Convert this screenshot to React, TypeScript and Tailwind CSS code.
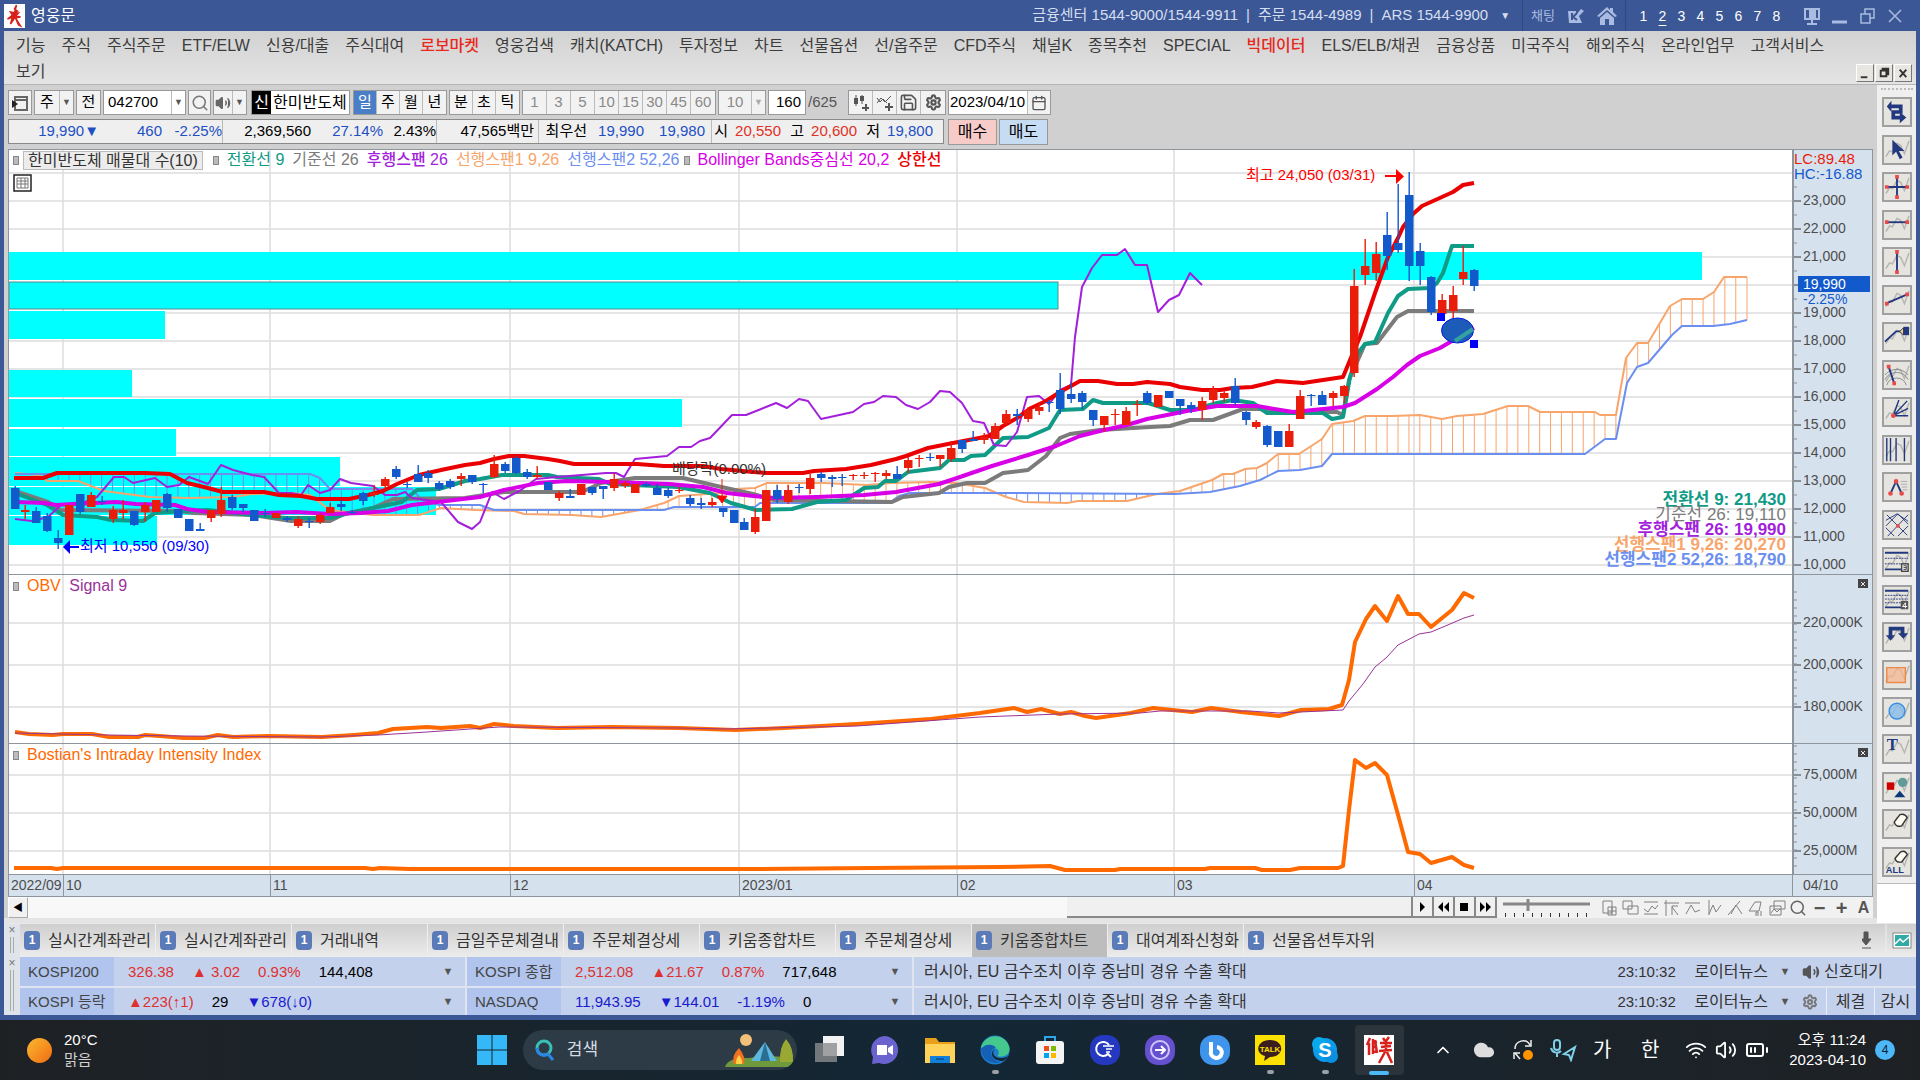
import type { ReactNode } from "react";
import clsx from "clsx";
import {
  BatteryMedium,
  Calendar,
  ChevronUp,
  Cloud,
  Home,
  Save,
  Search,
  Settings,
  Volume2,
  Wifi,
} from "lucide-react";

type Point = [number, number];
type Candle = ["R" | "B", number, number, number?, number?];

const FONT = 'font-["Liberation_Sans","Noto_Sans_CJK_KR",sans-serif]';

/* ---------- chart data ---------- */

const LEFT = 9;
const PLOT_W = 1783;
const barX = (i: number) => 14.5 + i * 10.894;

const parse = (s: string): Point[] =>
  s.split(" ").map((p) => p.split(",").map(Number) as Point);

const UPPER =
  "14,478 43,478 57,473 145,473 170,474 187,483 204,487 223,492 264,492 279,495 301,496 317,499 349,499 368,495 383,491 397,484 419,475 441,470 465,465 480,463 494,459 509,456 524,456 548,459 560,461 574,464 637,464 664,466 703,466 721,469 753,472 767,473 803,473 814,471 846,469 871,465 896,459 906,456 928,448 953,443 974,439 989,436 1003,426 1017,418 1031,408 1046,401 1060,392 1071,386 1080,381 1098,381 1117,384 1133,384 1147,382 1170,384 1180,387 1202,390 1220,390 1233,388 1252,387 1277,381 1303,383 1343,377 1350,360 1360,337 1375,293 1388,257 1398,238 1403,227 1413,214 1422,206 1453,192 1463,185 1474,183";
const CENTER =
  "15,502 44,503 56,505 73,504 116,502 136,504 175,505 187,509 208,512 264,513 296,512 330,514 361,513 388,511 412,505 446,501 480,497 504,490 538,483 567,481 611,482 669,484 703,487 727,493 753,496 774,498 817,497 864,495 896,492 939,484 960,477 992,466 1028,455 1056,446 1080,436 1100,431 1127,425 1147,419 1187,411 1217,406 1257,406 1293,412 1313,410 1343,407 1355,403 1377,389 1393,377 1407,365 1420,356 1440,348 1474,328";
const CONVERSION =
  "15,493 47,505 63,515 97,517 111,520 143,521 155,513 184,511 208,510 252,515 286,518 330,518 349,513 373,508 402,502 417,490 439,489 465,481 480,479 502,475 548,475 557,477 599,479 610,484 678,487 710,493 731,503 756,510 792,509 817,502 846,500 864,488 878,487 885,481 896,481 908,472 940,468 949,460 964,460 971,456 985,455 1003,438 1028,437 1049,428 1060,410 1083,409 1093,400 1103,403 1148,403 1170,410 1193,410 1217,403 1233,400 1253,403 1267,413 1323,413 1332,419 1343,417 1350,377 1358,353 1365,344 1375,342 1388,313 1398,296 1408,289 1430,288 1437,283 1443,273 1452,246 1474,246";
const BASE =
  "15,491 48,502 60,510 179,511 194,513 252,515 291,521 330,521 344,514 373,508 393,499 465,498 504,492 582,492 601,483 635,478 683,478 717,486 753,494 774,500 892,502 903,497 939,493 949,487 967,483 985,483 1003,473 1028,470 1046,456 1060,438 1070,434 1100,430 1150,427 1170,426 1190,420 1213,420 1243,409 1260,409 1273,412 1337,412 1343,415 1349,380 1365,344 1377,343 1397,317 1408,311 1474,311";
const LAGGING =
  "15,519 32,521 48,517 61,505 80,504 97,497 114,477 124,477 133,483 155,478 167,487 179,485 189,477 208,484 221,465 233,470 252,475 264,477 279,493 291,493 301,495 308,485 320,493 330,490 340,479 351,483 373,486 385,495 397,495 405,492 412,498 441,502 458,522 472,529 480,522 492,492 504,499 521,490 536,479 557,477 606,473 616,473 624,477 635,459 667,456 679,447 691,447 700,441 710,438 732,415 746,415 776,403 787,408 799,399 808,401 821,419 853,412 864,404 874,402 883,396 896,397 906,405 918,409 930,402 940,391 950,392 962,403 973,421 984,423 994,445 1006,446 1017,432 1027,397 1039,396 1049,404 1060,390 1071,385 1075,337 1082,287 1092,268 1102,255 1117,255 1125,249 1135,265 1147,265 1158,312 1169,300 1179,295 1190,273 1202,285";
const SPAN_A =
  "15,473 39,475 47,481 78,481 104,491 150,497 189,498 233,497 252,494 291,493 310,495 330,510 373,515 419,515 441,508 475,510 514,511 524,514 572,515 601,517 640,510 664,503 679,496 721,493 735,489 755,488 767,483 824,483 867,485 892,483 931,482 956,483 985,488 1006,497 1024,502 1067,503 1078,501 1127,501 1157,494 1180,491 1212,480 1223,474 1233,474 1245,469 1257,468 1267,463 1278,454 1299,454 1322,439 1332,424 1353,421 1365,416 1393,416 1420,415 1442,419 1457,416 1483,414 1508,406 1528,406 1540,412 1595,412 1600,415 1616,415 1626,358 1637,343 1648,343 1670,306 1682,299 1703,299 1714,292 1724,277 1747,277";
const SPAN_B =
  "15,474 310,474 320,478 330,489 412,489 422,500 439,505 480,505 494,510 664,510 674,507 755,507 760,503 889,503 899,496 910,493 1017,493 1175,494 1210,492 1240,486 1260,480 1278,471 1300,470 1322,466 1332,454 1585,454 1605,439 1616,439 1627,383 1637,367 1648,363 1672,335 1682,326 1713,326 1730,324 1747,320";
const OBV =
  "15,732 29,734 53,735 63,734 92,734 109,737 138,737 145,735 160,736 184,738 204,738 218,735 233,737 267,736 322,737 354,735 378,733 393,729 427,727 441,728 470,726 480,728 494,724 514,726 557,728 611,727 679,728 735,730 784,728 857,724 931,719 980,713 1014,708 1027,712 1041,709 1060,714 1071,712 1085,716 1096,718 1131,713 1153,708 1192,712 1211,708 1241,712 1279,716 1301,710 1329,709 1342,705 1349,680 1355,642 1366,619 1375,606 1387,621 1398,596 1408,614 1419,614 1431,627 1452,610 1464,593 1474,598";
const SIGNAL =
  "15,733 109,735 184,736 320,737 378,735 427,732 499,727 679,728 727,729 857,726 980,717 1060,714 1140,713 1160,711 1250,711 1279,713 1343,710 1349,701 1363,684 1375,667 1386,658 1398,645 1419,634 1431,632 1443,627 1464,618 1474,615";
const INTENSITY =
  "14,868 51,868 57,869 63,868 365,868 373,869 380,868 410,869 760,869 870,868 1000,867 1050,866 1065,870 1115,870 1120,869 1205,869 1210,868 1255,868 1262,870 1290,870 1300,868 1338,868 1343,866 1349,810 1355,760 1366,768 1375,763 1387,775 1400,822 1408,852 1420,854 1431,863 1452,857 1464,865 1474,868";

// [colour, body top, body bottom, wick top, wick bottom]
const CANDLES: Candle[] = [
  ["B", 488, 509, 486], ["R", 510, 512, 505, 519], ["B", 511, 523, 507], ["B", 516, 531, 513, 532],
  ["B", 538, 543, 530, 549], ["R", 505, 535], ["B", 494, 512, 494, 514], ["R", 495, 507, 492],
  ["B", 501, 502, 496, 505], ["R", 510, 519, 506, 523], ["R", 510, 513, 500, 519], ["B", 511, 525, 511, 526],
  ["R", 505, 512, 502, 522], ["R", 500, 512], ["B", 494, 508, 493, 512], ["B", 509, 518],
  ["B", 519, 531], ["B", 529, 531, 523], ["R", 510, 518, 510, 522], ["R", 500, 514, 487, 517],
  ["B", 497, 508, 495, 510], ["B", 504, 508, 504, 512], ["B", 510, 521], ["B", 513, 514, 509, 517],
  ["R", 513, 518], ["B", 518, 520, 516, 522], ["R", 519, 526, 516, 528], ["B", 521, 522, 518, 528],
  ["R", 515, 522, 513, 524], ["R", 507, 513, 503], ["B", 504, 507, 500, 511], ["B", 512, 513, 510, 514],
  ["B", 493, 501, 492, 505], ["R", 493, 495, 485, 497], ["R", 479, 486, 477, 489], ["B", 469, 477, 466, 479],
  ["B", 484, 485, 482, 488], ["B", 474, 482, 465], ["B", 473, 478, 470, 483], ["B", 483, 489, 481, 490],
  ["B", 481, 487, 479, 489], ["R", 476, 479, 473, 486], ["B", 475, 482, 475, 484], ["B", 484, 485, 483, 493],
  ["R", 464, 477, 455, 478], ["B", 464, 471, 462, 473], ["B", 458, 473, 456, 474], ["B", 472, 477, 469, 479],
  ["R", 475, 477, 466, 479], ["B", 482, 490], ["R", 493, 498, 491, 501], ["B", 496, 498, 489],
  ["R", 484, 495], ["B", 487, 493, 487, 495], ["B", 486, 489, 486, 499], ["R", 479, 488, 473, 491],
  ["R", 483, 486, 481, 488], ["R", 484, 493], ["B", 484, 486, 482, 487], ["B", 488, 495, 484],
  ["B", 490, 496, 488, 498], ["R", 490, 491, 487, 493], ["B", 498, 504, 495, 506], ["B", 503, 505, 498, 509],
  ["R", 502, 505, 498, 507], ["B", 508, 512, 508, 517], ["B", 510, 523], ["B", 522, 530, 518],
  ["R", 517, 532, 509, 534], ["R", 490, 521], ["B", 490, 499, 485, 503], ["R", 490, 502, 485, 504],
  ["B", 487, 488, 484, 493], ["R", 478, 489, 474, 494], ["B", 474, 478, 472, 482], ["B", 477, 479, 475, 487],
  ["B", 477, 478, 474, 486], ["R", 475, 476, 474, 480], ["R", 475, 476, 472, 479], ["R", 473, 474, 472, 482],
  ["R", 473, 476, 470, 479], ["B", 474, 479, 466], ["R", 460, 468, 457, 473], ["R", 458, 459, 455, 467],
  ["B", 457, 458, 453, 461], ["R", 455, 459, 455, 467], ["R", 448, 459, 441, 462], ["B", 440, 449, 440, 453],
  ["B", 439, 441, 431], ["R", 437, 440, 433, 444], ["R", 426, 439, 423], ["R", 414, 423, 410, 425],
  ["B", 414, 416, 409, 425], ["R", 410, 419, 407, 422], ["R", 407, 411, 402, 415], ["B", 402, 403, 400, 412],
  ["B", 390, 409, 373, 414], ["B", 394, 399, 383, 403], ["B", 393, 402, 391, 409], ["B", 410, 420, 410, 426],
  ["R", 416, 425, 416, 432], ["R", 414, 415, 409, 425], ["R", 411, 425, 407], ["R", 404, 405, 400, 416],
  ["B", 393, 403, 391, 405], ["R", 395, 407], ["B", 391, 398], ["B", 399, 406, 399, 415],
  ["B", 405, 409, 402, 413], ["R", 401, 410, 397, 420], ["R", 389, 400, 386, 403], ["R", 393, 398, 391, 402],
  ["B", 386, 403, 378, 405], ["B", 412, 420, 411, 425], ["R", 422, 427, 420, 429], ["B", 426, 445, 425, 447],
  ["B", 431, 447], ["R", 431, 447, 424], ["R", 396, 419, 390], ["B", 395, 396, 394, 406],
  ["B", 395, 405, 391], ["R", 393, 398, 391, 406], ["R", 386, 396, 385, 403], ["R", 286, 373, 269, 377],
  ["R", 266, 275, 239, 285], ["R", 254, 273, 242, 281], ["B", 235, 256, 212, 270], ["B", 243, 250, 184, 253],
  ["B", 195, 266, 172, 281], ["B", 251, 266, 243, 285], ["B", 277, 312, 276, 315], ["R", 300, 314, 294],
  ["R", 295, 311, 286, 318], ["R", 272, 279, 246, 285], ["B", 270, 286, 269, 291],
];

// [top, height, right edge]
const VOLUME_BANDS = [
  [252, 28, 1702], [311, 28, 165], [370, 27, 132], [399, 28, 682],
  [429, 27, 176], [457, 29, 340], [487, 28, 436], [516, 29, 157],
];

const MONTHS = [
  { x: 9, label: "2022/09" },
  { x: 63, label: "10" },
  { x: 270, label: "11" },
  { x: 510, label: "12" },
  { x: 739, label: "2023/01" },
  { x: 957, label: "02" },
  { x: 1174, label: "03" },
  { x: 1414, label: "04" },
];

const priceY = (i: number) => 173 + i * 28;

const at = (pts: Point[], x: number) => {
  const i = Math.max(1, pts.findIndex((p) => p[0] >= x));
  const [x0, y0] = pts[i - 1];
  const [x1, y1] = pts[i];
  return y0 + ((y1 - y0) * (x - x0)) / (x1 - x0);
};

/* ---------- chart ---------- */

const Line = ({ d, color, w }: { d: string; color: string; w: number }) => (
  <polyline points={d} fill="none" stroke={color} strokeWidth={w} strokeLinejoin="round" />
);

const Grid = ({ ys, top, bottom }: { ys: number[]; top: number; bottom: number }) => (
  <g stroke="#dcdcdc" strokeWidth="1.500">
    {ys.map((y) => (
      <line key={y} x1={LEFT} x2={LEFT + PLOT_W} y1={y} y2={y} />
    ))}
    {MONTHS.slice(1).map((m) => (
      <line key={m.x} x1={m.x} x2={m.x} y1={top} y2={bottom} />
    ))}
  </g>
);

const SpanFill = () => {
  const a = parse(SPAN_A);
  const b = parse(SPAN_B);
  return (
    <g>
      {Array.from({ length: 158 }, (_, i) => {
        const x = barX(i + 1);
        const ya = at(a, x);
        const yb = at(b, x);
        return (
          <line key={i} x1={x} x2={x} y1={ya} y2={yb} stroke={ya < yb ? "#f8a56c" : "#6b8ff0"} />
        );
      })}
      <line x1="1747" x2="1747" y1="277" y2="320" stroke="#f8a56c" />
    </g>
  );
};

const PricePlot = () => (
  <svg className="block h-full w-full" viewBox="9 150 1783 424" preserveAspectRatio="none">
    <Grid ys={Array.from({ length: 15 }, (_, i) => priceY(i))} top={150} bottom={574} />
    {VOLUME_BANDS.map(([y, h, r]) => (
      <rect key={y} x={LEFT} y={y} width={r - LEFT} height={h} fill="#00ffff" />
    ))}
    <rect x={LEFT} y="282" width="1049" height="27" fill="#00ffff" stroke="#5c8a8a" />
    <SpanFill />
    <Line d={SPAN_A} color="#f8a56c" w={2} />
    <Line d={SPAN_B} color="#6b8ff0" w={2} />
    <Line d={BASE} color="#7b7b7b" w={4} />
    <Line d={CONVERSION} color="#0f9b86" w={4} />
    <Line d={LAGGING} color="#a31fdc" w={2} />
    <Line d={UPPER} color="#ea0000" w={4} />
    <Line d={CENTER} color="#d800e6" w={4} />
    {CANDLES.map(([c, top, bottom, high = top, low = bottom], i) => (
      <g key={i} fill={c === "R" ? "#ea1c0a" : "#1259cc"}>
        <rect x={Math.round(barX(i)) - 0.5} y={high} width="1.4" height={Math.max(low, bottom) - high} />
        <rect x={Math.round(barX(i)) - 4} y={top} width="8.500" height={bottom - top} />
      </g>
    ))}
    <path d="M722 479v18M717 496h10l-5 7z" stroke="#ea1c0a" fill="#ff0000" />
    <path d="M1385 176h12" stroke="#ff0000" strokeWidth="2" />
    <path d="M1396 169l8 7.500l-8 7.500z" fill="#ff0000" />
    <path d="M69 547h10" stroke="#0000ff" strokeWidth="2" />
    <path d="M70 540l-7 7l7 7z" fill="#0000ff" />
    <ellipse cx="1457.500" cy="330.500" rx="16" ry="12.500" fill="#1c5cb8" stroke="#0018e0" />
    <path d="M1455 341l18-12" stroke="#35a0a0" strokeWidth="4" />
    <path d="M1437 313h8v8h-8zM1470 340h8v8h-8z" fill="#0000ff" />
  </svg>
);

const ObvPlot = () => (
  <svg className="block h-full w-full" viewBox="9 575 1783 168" preserveAspectRatio="none">
    <Grid ys={[623, 665, 707]} top={575} bottom={743} />
    <Line d={OBV} color="#ff6a00" w={4} />
    <Line d={SIGNAL} color="#9a3396" w={1} />
  </svg>
);

const IntensityPlot = () => (
  <svg className="block h-full w-full" viewBox="9 744 1783 130" preserveAspectRatio="none">
    <Grid ys={[775, 813, 851]} top={744} bottom={874} />
    <Line d={INTENSITY} color="#ff6a00" w={4} />
  </svg>
);

type AxisProps = {
  labels: { y: number; text: string }[];
  minor: number[];
  children?: ReactNode;
};

const Axis = ({ labels, minor, children }: AxisProps) => (
  <div className="relative w-20 shrink-0 border-l-2 border-[#8f959c] bg-[#d6e1ee]">
    <svg className="block h-full w-full overflow-hidden text-sm">
      {minor.map((y) => (
        <path key={y} d={`M0 ${y}h3`} stroke="#8a8f96" />
      ))}
      {labels.map(({ y, text }) => (
        <g key={text}>
          <path d={`M0 ${y}h7`} stroke="#8a8f96" strokeWidth="2" />
          <text x="9" y={y + 4} fill="#4c4c4c">
            {text}
          </text>
        </g>
      ))}
      {children}
    </svg>
  </div>
);

const PanelClose = () => (
  <button
    aria-label="지표 닫기"
    className="absolute right-1 top-1 flex h-[9px] w-[10px] items-center justify-center bg-[#444]"
  >
    <svg viewBox="0 0 6 6" className="h-[6px] w-[6px]">
      <path d="M1 1l4 4M5 1l-4 4" stroke="#eee" />
    </svg>
  </button>
);

const Bullet = () => <i className="mr-2 inline-block h-[9px] w-[6px] border border-[#888] bg-[#bbb]" />;

const steps = (from: number, to: number, step: number) =>
  Array.from({ length: Math.floor((to - from) / step) + 1 }, (_, i) => from + i * step);

const pct = (x: number) => `${((x - LEFT) / PLOT_W) * 100}%`;

const READOUT = [
  { text: "전환선 9: 21,430", color: "text-[#0f9b86]", bold: true },
  { text: "기준선 26: 19,110", color: "text-[#7b7b7b]" },
  { text: "후행스팬 26: 19,990", color: "text-[#a31fdc]", bold: true },
  { text: "선행스팬1 9,26: 20,270", color: "text-[#f8a56c]", bold: true },
  { text: "선행스팬2 52,26: 18,790", color: "text-[#6b8ff0]", bold: true },
];

const Chart = () => (
  <div className="border border-[#8f959c] bg-white text-[15px]">
    <div className="flex h-[424px]">
      <div className="relative min-w-0 flex-1">
        <PricePlot />
        <div className="absolute left-1 top-0 flex h-5 items-center whitespace-nowrap text-base">
          <Bullet />
          <span className="-ml-1 border border-[#bbb] bg-[#ececec] px-1 leading-[17px] text-[#333]">
            한미반도체 매물대 수(10)
          </span>
          <span className="ml-[10px] flex items-center gap-2">
            <span className="text-[#0f9b86]">
              <Bullet />
              전환선 9
            </span>
            <span className="text-[#7b7b7b]">기준선 26</span>
            <span className="font-medium text-[#a31fdc]">후행스팬 26</span>
            <span className="text-[#f8a56c]">선행스팬1 9,26</span>
            <span className="text-[#6b8ff0]">선행스팬2 52,26</span>
          </span>
          <span className="ml-1 flex gap-2 text-[#d800e6]">
            <span>
              <Bullet />
              Bollinger Bands중심선 20,2
            </span>
            <span className="font-medium text-[#ea0000]">상한선</span>
          </span>
        </div>
        <svg className="absolute left-1 top-6 h-[18px] w-[19px]" viewBox="0 0 19 18">
          <path d="M1 1h17v16H1z" fill="#fff" stroke="#222" strokeWidth="1.500" />
          <path d="M4 4h11v10H4zM4 7h11M4 10h11M8 4v10M12 4v10" fill="none" stroke="#777" />
        </svg>
        <p
          className="absolute top-[15px] whitespace-nowrap leading-5 text-[#ff0000]"
          style={{ left: pct(1246) }}
        >
          최고 24,050 (03/31)
        </p>
        <p
          className="absolute top-[386px] whitespace-nowrap leading-5 text-[#0000ff]"
          style={{ left: pct(80) }}
        >
          최저 10,550 (09/30)
        </p>
        <p
          className="absolute top-[309px] whitespace-nowrap leading-5 text-[#333]"
          style={{ left: pct(672) }}
        >
          배당락(0.00%)
        </p>
        <div className="absolute bottom-[7px] right-[6px] text-right text-[17px] leading-[15px]">
          {READOUT.map((r) => (
            <p key={r.text} className={clsx(r.color, r.bold && "font-bold")}>
              {r.text}
            </p>
          ))}
        </div>
      </div>
      <Axis
        labels={steps(0, 13, 1).map((i) => ({ y: 51 + i * 28, text: `${23 - i},000` }))}
        minor={steps(37, 400, 28)}
      >
        <text x="0" y="14" fill="#ea1c0a" className="text-[15px]">LC:89.48</text>
        <text x="0" y="29" fill="#1259cc" className="text-[15px]">HC:-16.88</text>
        <rect x="8" y="141" width="66" height="15" fill="#d6e1ee" />
        <rect x="4" y="126" width="72" height="16" fill="#1259cc" />
        <text x="9" y="139" fill="#fff">19,990</text>
        <text x="9" y="154" fill="#1259cc">-2.25%</text>
      </Axis>
    </div>
    <div className="flex h-[169px] border-t border-[#8f959c]">
      <div className="relative min-w-0 flex-1">
        <ObvPlot />
        <p className="absolute left-1 top-0 text-base leading-[22px] text-[#ff6a00]">
          <Bullet />
          OBV <span className="ml-1 text-[#9a3396]">Signal 9</span>
        </p>
      </div>
      <div className="relative flex">
        <Axis
          labels={[
            { y: 48, text: "220,000K" },
            { y: 90, text: "200,000K" },
            { y: 132, text: "180,000K" },
          ]}
          minor={steps(17, 136, 8)}
        />
        <PanelClose />
      </div>
    </div>
    <div className="flex h-[131px] border-t border-[#8f959c]">
      <div className="relative min-w-0 flex-1">
        <IntensityPlot />
        <p className="absolute left-1 top-0 text-base leading-[22px] text-[#ff6a00]">
          <Bullet />
          Bostian&apos;s Intraday Intensity Index
        </p>
      </div>
      <div className="relative flex">
        <Axis
          labels={[
            { y: 31, text: "75,000M" },
            { y: 69, text: "50,000M" },
            { y: 107, text: "25,000M" },
          ]}
          minor={steps(2, 124, 8)}
        />
        <PanelClose />
      </div>
    </div>
    <div className="flex h-[22px] border-t border-[#8f959c] bg-[#d6e1ee] text-sm text-[#4c4c4c]">
      <div className="relative flex-1">
        {MONTHS.map((m, i) => (
          <span
            key={m.label}
            className={clsx("absolute inset-y-0 pl-[2px] leading-5", i > 0 && "border-l border-[#8f959c]")}
            style={{ left: pct(m.x) }}
          >
            {m.label}
          </span>
        ))}
      </div>
      <span className="w-20 border-l border-[#8f959c] pl-[10px] leading-5">04/10</span>
    </div>
  </div>
);

/* ---------- title bar and menu ---------- */

const TitleBar = () => (
  <header className="flex h-[31px] items-center text-[15px] text-[#d5def0]">
    <svg viewBox="0 0 20 24" className="mr-[6px] h-[24px] w-[21px] bg-white">
      <path
        d="M12 1l-2 4l3 2l-5 2l6 0l-3 3l5 1l-6 1l-4 6l2-7l-5 2l5-4l-2-3l4 1zM11 14l5 8l-2-1z"
        fill="#d8201c"
        stroke="#d8201c"
        strokeWidth="1.500"
      />
    </svg>
    <h1 className="text-base text-white">영웅문</h1>
    <p className="ml-auto flex items-center gap-2 whitespace-nowrap">
      <span>금융센터 1544-9000/1544-9911</span>|<span>주문 1544-4989</span>|<span>ARS 1544-9900</span>
    </p>
    <button aria-label="전화번호 목록" className="px-3 text-[10px]">▼</button>
    <div className="flex h-full items-center gap-3 border-l border-[#2f4780] px-2 text-[#a9bbe0]">
      <button className="text-[13px]">채팅</button>
      <svg viewBox="0 0 18 18" className="h-[18px] w-[18px]">
        <path d="M1 4h8v4l5-6l3 2l-5 5l3 7H2z" fill="#a9bbe0" />
        <path d="M5 6v7M10 6l-4 4l4 3" stroke="#3b5795" strokeWidth="2" fill="none" />
      </svg>
      <svg viewBox="0 0 20 20" className="h-5 w-5" fill="#a9bbe0">
        <path d="M10 1L0 10l2 1l8-7l8 7l2-1l-4-4V2h-3v2z" />
        <path d="M3 12l7-6l7 6v7h-5v-6H8v6H3z" />
      </svg>
    </div>
    <nav className="flex h-full items-center border-l border-[#2f4780] px-2 text-sm text-white">
      {[1, 2, 3, 4, 5, 6, 7, 8].map((n) => (
        <button key={n} className={clsx("w-[19px]", n === 2 && "underline underline-offset-4")}>
          {n}
        </button>
      ))}
    </nav>
    <svg viewBox="0 0 122 30" className="h-[30px] w-[122px]" fill="none" stroke="#a9bbe0" strokeWidth="2">
      <path d="M11 8h14v10H11zM18 18v5M13 23h10" />
      <path d="M16 10h5v6h-5z" fill="#a9bbe0" />
      <path d="M38 21h15" strokeWidth="3" />
      <path d="M67 13h9v9h-9zM71 13V8h9v9h-4" strokeWidth="1.500" />
      <path d="M95 9l12 12M107 9l-12 12" strokeWidth="1.500" />
    </svg>
  </header>
);

const MENU = [
  "기능", "주식", "주식주문", "ETF/ELW", "신용/대출", "주식대여", "로보마켓", "영웅검색",
  "캐치(KATCH)", "투자정보", "차트", "선물옵션", "선/옵주문", "CFD주식", "채널K", "종목추천",
  "SPECIAL", "빅데이터", "ELS/ELB/채권", "금융상품", "미국주식", "해외주식", "온라인업무",
  "고객서비스", "보기",
];

const MenuBar = () => (
  <nav className="relative flex h-[54px] flex-wrap content-start gap-x-4 border-b border-[#b5b5b5] bg-linear-to-b from-[#d2d2d2] to-[#e4e4e4] pl-3 pr-14 pt-[2px] text-base leading-[26px] text-[#3c3c3c]">
    {MENU.map((item) => (
      <button
        key={item}
        className={clsx(
          "whitespace-nowrap",
          (item === "로보마켓" || item === "빅데이터") && "font-medium text-[#e8281c]",
        )}
      >
        {item}
      </button>
    ))}
    <div className="absolute bottom-[2px] right-1 flex gap-px">
      {["M4 13h7", "M5 6h6v6H5zM7 6V4h6v6h-2", "M5 5l7 8M12 5l-7 8"].map((d) => (
        <button
          key={d}
          aria-label="창 조절"
          className="h-[18px] w-[18px] border border-[#777] border-l-white border-t-white bg-[#e8e6e0]"
        >
          <svg viewBox="0 0 17 17">
            <path d={d} fill="none" stroke="#333" strokeWidth="2" />
          </svg>
        </button>
      ))}
    </div>
  </nav>
);

/* ---------- chart toolbar ---------- */

const Box = ({ className, children }: { className?: string; children: ReactNode }) => (
  <div className={clsx("flex h-[25px] items-center border border-[#999] bg-[#f2f2f2]", className)}>
    {children}
  </div>
);

const Caret = ({ faint }: { faint?: boolean }) => (
  <button
    aria-label="펼치기"
    className={clsx("h-full w-[14px] shrink-0 border-l border-[#bbb] text-[9px]", faint ? "text-[#aaa]" : "text-[#555]")}
  >
    ▼
  </button>
);

const Group = ({ items, active, faint }: { items: string[]; active?: string; faint?: boolean }) => (
  <Box className="divide-x divide-[#bbb]">
    {items.map((t) => (
      <button
        key={t}
        className={clsx(
          "h-full",
          t === active && "bg-[#4a7fc8] text-white",
          faint ? "w-6 text-[#8a8a8a]" : "w-[23px]",
        )}
      >
        {t}
      </button>
    ))}
  </Box>
);

const Toolbar = () => (
  <div className="flex items-center gap-[2px] text-[15px] text-black">
    <Box className="w-6 justify-center">
      <svg viewBox="0 0 18 18" className="h-[18px] w-[18px]">
        <path d="M4 3h12v13H4zM4 6h12" fill="none" stroke="#666" strokeWidth="2" />
        <path d="M1 6l6 4l-6 4z" fill="#222" />
      </svg>
    </Box>
    <Box>
      <button className="w-6">주</button>
      <Caret />
    </Box>
    <Box>
      <button className="w-[23px]">전</button>
    </Box>
    <Box className="bg-white">
      <input aria-label="종목코드" defaultValue="042700" className="w-[67px] bg-white px-1" />
      <Caret />
    </Box>
    <Box className="w-[23px] justify-center">
      <Search className="h-[18px] w-[18px] text-[#777]" />
    </Box>
    <Box>
      <Volume2 className="mx-px h-4 w-4 fill-[#666] text-[#666]" />
      <Caret />
    </Box>
    <Box className="ml-[2px] mr-px bg-white">
      <b className="h-full w-[19px] bg-black text-center text-base font-normal leading-[23px] text-white">신</b>
      <span className="w-[78px] overflow-hidden whitespace-nowrap pl-[2px] text-base leading-[23px]">한미반도체</span>
    </Box>
    <Group items={["일", "주", "월", "년"]} active="일" />
    <Group items={["분", "초", "틱"]} />
    <Group items={["1", "3", "5", "10", "15", "30", "45", "60"]} faint />
    <Box>
      <span className="w-8 text-center text-[#8a8a8a]">10</span>
      <Caret faint />
    </Box>
    <Box className="bg-white">
      <input aria-label="봉 개수" defaultValue="160" className="w-9 bg-white pr-1 text-right" />
    </Box>
    <span className="w-[38px] text-[#555]">/625</span>
    <Box className="divide-x divide-[#bbb] text-[#555]">
      <button aria-label="봉 추가" className="flex h-full w-6 items-center justify-center">
        <svg viewBox="0 0 18 18" className="h-[18px] w-[18px]">
          <path d="M4 1v11M10 1v9" stroke="#555" />
          <path d="M2 4h4v6H2zM8 2h4v5H8z" fill="#555" />
          <path d="M10 14h7M14 10v7" stroke="#555" strokeWidth="2" />
        </svg>
      </button>
      <button aria-label="선 추가" className="flex h-full w-6 items-center justify-center">
        <svg viewBox="0 0 18 18" className="h-[18px] w-[18px]" fill="none" stroke="#555">
          <path d="M1 9l4-5l4 4l6-6M1 4l3 4l3-3l4 4" />
          <path d="M13 9v8M9 13h8" strokeWidth="2" />
        </svg>
      </button>
      <button aria-label="저장" className="flex h-full w-6 items-center justify-center">
        <Save className="h-[19px] w-[19px]" />
      </button>
      <button aria-label="설정" className="flex h-full w-6 items-center justify-center">
        <Settings className="h-[17px] w-[17px]" strokeWidth={3} />
      </button>
    </Box>
    <Box className="bg-white">
      <input aria-label="조회일" defaultValue="2023/04/10" className="w-[78px] bg-white pl-px" />
      <button aria-label="달력" className="flex h-full w-[23px] items-center justify-center border-l border-[#bbb] bg-[#f2f2f2]">
        <Calendar className="h-4 w-4 text-[#555]" />
      </button>
    </Box>
  </div>
);

const QuoteBar = () => (
  <div className="flex gap-1 text-[15px]">
    <div className="flex h-[25px] w-[936px] items-center border border-[#8a8a8a] bg-[#efefef] text-right text-[#1d50c4]">
      <span className="w-[90px]">19,990▼</span>
      <span className="w-[63px]">460</span>
      <span className="w-[61px] border-r border-[#bbb]">-2.25%</span>
      <span className="w-[88px] text-black">2,369,560</span>
      <span className="w-[72px]">27.14%</span>
      <span className="w-[54px] border-r border-[#bbb] text-black">2.43%</span>
      <span className="w-[102px] border-r border-[#bbb] pr-1 text-black">47,565백만</span>
      <span className="w-[48px] text-black">최우선</span>
      <span className="w-[57px]">19,990</span>
      <span className="w-[68px] border-r border-[#bbb] pr-[6px]">19,980</span>
      <span className="w-[16px] text-black">시</span>
      <span className="w-[53px]"><span className="text-[#e0301e]">20,550</span></span>
      <span className="w-[23px] text-black">고</span>
      <span className="w-[53px]"><span className="text-[#e0301e]">20,600</span></span>
      <span className="w-[23px] text-black">저</span>
      <span className="w-[53px]">19,800</span>
    </div>
    <button className="-mr-[2px] w-[49px] border border-[#999] bg-[#f6cbc8] text-base">매수</button>
    <button className="w-[49px] border border-[#999] bg-[#c5dcf2] text-base">매도</button>
  </div>
);

/* ---------- drawing tools ---------- */

const WAVE = "M3 22l4-6l3 1l5-9l4 2l4 9l5-14";
const NAVY = "#23397f";
const RED = "#e84a4a";

const TOOLS: { name: string; art: ReactNode; plain?: boolean }[] = [
  {
    name: "되돌리기",
    plain: true,
    art: (
      <>
        <path d="M8 9h11v6h-8v6h8" fill="none" stroke={NAVY} strokeWidth="4" />
        <path d="M9 3v12L4 9zM18 15v12l7-6z" fill={NAVY} />
      </>
    ),
  },
  { name: "선택", art: <path d="M10 4v17l4-4l4 8l3-2l-4-7h6z" fill={NAVY} /> },
  {
    name: "십자선",
    art: (
      <>
        <path d="M3 15h23M15 3v23" stroke={NAVY} strokeWidth="2" />
        <path d="M2 13h4v4H2zM24 13h4v4h-4zM13 2h4v4h-4zM13 24h4v4h-4z" fill={RED} />
      </>
    ),
  },
  {
    name: "수평선",
    art: (
      <>
        <path d="M3 12h23" stroke={NAVY} strokeWidth="2" />
        <path d="M2 10h4v4H2zM24 10h4v4h-4z" fill={RED} />
      </>
    ),
  },
  {
    name: "수직선",
    art: (
      <>
        <path d="M15 3v23" stroke={NAVY} strokeWidth="2" />
        <path d="M13 2h4v4h-4zM13 24h4v4h-4z" fill={RED} />
      </>
    ),
  },
  {
    name: "추세선",
    art: (
      <>
        <path d="M3 19l23-10" stroke={NAVY} strokeWidth="2" />
        <path d="M2 17h4v4H2zM24 7h4v4h-4z" fill={RED} />
      </>
    ),
  },
  {
    name: "자유선",
    art: (
      <>
        <path d="M2 20l12-11h6" stroke={NAVY} strokeWidth="2" fill="none" />
        <path d="M18 9l4-4v8z" fill="#f5d79a" stroke="#333" />
        <path d="M22 4h6v9h-6z" fill={NAVY} />
      </>
    ),
  },
  {
    name: "피보나치 아크",
    art: (
      <>
        <path d="M4 26a11 11 0 0 1 21 0M2 20a14 14 0 0 1 25 0M2 15a16 16 0 0 1 25 0" fill="none" stroke="#888" />
        <path d="M6 6l6 18" stroke={NAVY} strokeWidth="2" />
        <path d="M4 4h4v4H4zM10 22h4v4h-4z" fill={RED} />
      </>
    ),
  },
  {
    name: "팬",
    art: (
      <>
        <path d="M11 19L17 2M11 19L26 3M11 19l16-8M11 19h16" stroke={NAVY} strokeWidth="1.500" />
        <circle cx="11" cy="19" r="2.500" fill={RED} />
      </>
    ),
  },
  { name: "시간대", art: <path d="M4 2v25M8 2v25M14 2v25M23 2v25" stroke={NAVY} strokeWidth="1.500" /> },
  {
    name: "삼점선",
    plain: true,
    art: (
      <>
        <path d="M8 22l6-13l6 13" stroke={NAVY} strokeWidth="2" fill="none" />
        <path d="M19 9h7M19 12h7M20 15h6M21 18h5" stroke="#aaa" />
        <g fill={RED}>
          <circle cx="14" cy="9" r="2.500" />
          <circle cx="8" cy="22" r="2.500" />
          <circle cx="20" cy="22" r="2.500" />
        </g>
      </>
    ),
  },
  {
    name: "격자",
    plain: true,
    art: (
      <>
        <path
          d="M3 10L15 3l12 8M4 4l22 22M27 4L5 27M3 18l9 9M3 16L16 3M16 3l11 11M27 16L16 27"
          stroke={NAVY}
          fill="none"
        />
        <circle cx="16" cy="16" r="2" fill={RED} />
      </>
    ),
  },
  {
    name: "삼등분선",
    art: (
      <>
        <path d="M2 5h25M2 23h25" stroke={NAVY} strokeWidth="2" />
        <path d="M2 11h25M2 17h25" stroke={NAVY} strokeDasharray="2 1" />
        <rect x="20" y="17" width="7" height="8" fill="#eee" stroke="#444" strokeWidth="1.500" />
        <path d="M22 19h3v4h-3M22 21h3" fill="none" stroke="#444" />
      </>
    ),
  },
  {
    name: "사등분선",
    art: (
      <>
        <path d="M2 5h25M2 23h25" stroke={NAVY} strokeWidth="2" />
        <path d="M2 10h25M2 14h25M2 18h25" stroke={NAVY} strokeDasharray="2 1" />
        <rect x="19" y="16" width="8" height="9" fill="#555" />
        <path d="M24 24v-6l-3 4h5" fill="none" stroke="#fff" />
      </>
    ),
  },
  {
    name: "구간이동",
    art: (
      <>
        <path d="M8 14V6h13v6" fill="none" stroke={NAVY} strokeWidth="4" />
        <path d="M3 13h10l-5 6zM16 11h11l-5 6z" fill={NAVY} />
      </>
    ),
  },
  { name: "사각형", art: <path d="M4 7h20v16H4z" fill="#f6b48c" fillOpacity="0.7" stroke="#ee8848" strokeWidth="1.500" /> },
  { name: "원", art: <circle cx="15" cy="14" r="8.500" fill="#86bdec" fillOpacity="0.8" stroke="#3a8ee0" strokeWidth="1.500" /> },
  {
    name: "텍스트",
    art: (
      <text x="4" y="16" fill={NAVY} className='font-["Liberation_Serif",serif] text-lg font-bold'>
        T
      </text>
    ),
  },
  {
    name: "도형",
    art: (
      <>
        <path d="M4 10h8v8H4z" fill="#cf0000" />
        <circle cx="21" cy="10" r="5" fill="#5f9c98" />
        <path d="M18 19l6 7H12z" fill="#0c3a78" />
      </>
    ),
  },
  { name: "지우기", art: <path d="M12 13l6-8q5-2 8 3l-6 9q-6 2-8-4z" fill="#fffdf2" stroke="#333" strokeWidth="1.500" /> },
  {
    name: "모두 지우기",
    art: (
      <>
        <path d="M13 11l6-7q5-2 7 3l-6 8q-6 1-7-4z" fill="#fffdf2" stroke="#333" strokeWidth="1.500" />
        <text x="3" y="27" fill={NAVY} className='font-["Liberation_Sans",sans-serif] text-[10px] font-bold'>
          ALL
        </text>
      </>
    ),
  },
];

const DrawingTools = () => (
  <aside className="flex w-[39px] shrink-0 flex-col bg-white">
    <div className="flex h-[799px] flex-col items-center justify-between border-b border-[#bbb] bg-[#efefef] pb-[6px] pt-[3px]">
      <div className="w-8 border-t-2 border-dotted border-[#bbb]" />
      {TOOLS.map((t) => (
        <button key={t.name} aria-label={t.name} className="h-[30px] w-[30px] border-2 border-[#a0a0a0] bg-[#e6e4df]">
          <svg viewBox="1 1 28 28" className="block h-full w-full">
            {!t.plain && <path d={WAVE} fill="none" stroke="#b4b4b0" strokeWidth="1.500" />}
            {t.art}
          </svg>
        </button>
      ))}
    </div>
  </aside>
);

/* ---------- scroll row ---------- */

const SMALL_TOOLS = [
  "M3 2h9v12H3zM8 8h8v8H8zM12 8v8M8 12h8",
  "M2 2h9v8H2zM7 7h10v8H7z",
  "M2 3h14M2 15h14M2 10l4 3l4-6l3 3l3-4",
  "M3 1v16M1 4h15M9 16V7h6M9 8l6 8",
  "M1 4h15M2 15l5-9l4 7l5-2",
  "M4 1v15M4 15l4-9l3 7l5-7",
  "M2 16L14 2M5 15l5-9l6 9",
  "M2 12l6-9h6l-2 9H2zM9 17v-4h2v4M14 17v-5",
  "M6 2h11v8H6zM2 7h11v9H2zM3 14l3-4l3 3l3-3",
];

const ScrollRow = () => (
  <div className="flex h-[21px] items-center bg-[#f1f1f1]">
    <button aria-label="이전" className="h-full w-5 border border-[#aaa] border-l-white border-t-white text-[10px] leading-none">
      ◀
    </button>
    <div className="flex h-full flex-1 bg-[#f8f8f8]">
      <div className="ml-auto w-1/4 border-b-2 border-r-2 border-[#888] bg-[#f0f0f0]" />
    </div>
    {["M7 4l5 5l-5 5z", "M9 4v10l-5-5zM15 4v10l-5-5z", "M5 5h8v8H5z", "M4 4l5 5l-5 5zM10 4l5 5l-5 5z"].map((d) => (
      <button key={d} aria-label="재생 조절" className="h-full w-[21px] border-b-2 border-r-2 border-[#888] bg-[#f0f0f0]">
        <svg viewBox="0 0 19 18">
          <path d={d} />
        </svg>
      </button>
    ))}
    <div className="relative ml-[6px] mr-[10px] h-full w-[87px]">
      <svg viewBox="0 0 87 21" className="h-full w-full">
        <path d="M0 7h87" stroke="#888" strokeWidth="3" />
        <path d="M25 2v12" stroke="#888" strokeWidth="3" />
        <path d="M2 18h84" stroke="#333" strokeWidth="4" strokeDasharray="1 8" />
      </svg>
      <input type="range" aria-label="재생 속도" className="absolute inset-0 w-full opacity-0" />
    </div>
    <div className="flex items-center gap-[3px]">
      {SMALL_TOOLS.map((d) => (
        <button key={d} aria-label="차트 도구" className="h-[18px] w-[18px]">
          <svg viewBox="0 0 18 18" fill="none" stroke="#808080" strokeWidth="1">
            <path d={d} />
          </svg>
        </button>
      ))}
      <Search className="h-[18px] w-[18px] text-[#666]" />
      <button className="w-[19px] text-xl font-bold leading-none text-[#555]">−</button>
      <button className="w-[19px] text-xl font-bold leading-none text-[#555]">+</button>
      <button className="w-[19px] text-base font-bold leading-none text-[#555]">A</button>
    </div>
  </div>
);

/* ---------- bottom bars ---------- */

const TABS = [
  "실시간계좌관리", "실시간계좌관리", "거래내역", "금일주문체결내", "주문체결상세",
  "키움종합차트", "주문체결상세", "키움종합차트", "대여계좌신청화", "선물옵션투자위",
];

const Grip = () => (
  <div className="flex w-4 shrink-0 flex-col items-center bg-[#dfe3ea] text-xs leading-[12px] text-[#777]">
    ×
    <div className="mb-1 mt-px w-1 flex-1 border-x border-[#aaa]" />
  </div>
);

const TabBar = () => (
  <div className="flex h-[34px] border-t border-[#e8e8e8] bg-linear-to-b from-[#cfcfcf] to-[#ececec]">
    <Grip />
    {TABS.map((t, i) => (
      <button
        key={i}
        className={clsx(
          "flex w-[136px] items-center overflow-hidden border-r border-[#eee] pl-1 text-base text-[#333]",
          i === 7 && "bg-[#bdbdbd]",
          i === 9 && "border-r-0",
        )}
      >
        <span className="mr-2 h-[19px] w-4 shrink-0 rounded-sm bg-[#5b7bb8] text-center text-xs font-bold leading-[19px] text-white">
          1
        </span>
        <span className="whitespace-nowrap">{t}</span>
      </button>
    ))}
    <svg viewBox="0 0 54 32" className="ml-auto h-8 w-[54px]">
      <path d="M2 8h4v7h3l-5 6l-5-6h3zM0 24h9" fill="#555" stroke="#555" />
      <path d="M24 0v32" stroke="#eee" />
      <rect x="31" y="9" width="18" height="15" fill="#fff" stroke="#888" />
      <path d="M33 11h14v11H33z" fill="#32aaa6" />
      <path d="M33 20l5-5l3 3l6-5" stroke="#fff" fill="none" strokeWidth="1.500" />
    </svg>
  </div>
);

const Down = () => (
  <button aria-label="목록" className="w-[34px] shrink-0 text-[11px] text-[#555]">▼</button>
);

const IndexCell = ({ name, children }: { name: string; children: ReactNode }) => (
  <div className="flex w-[447px] items-center border-r-2 border-[#dfe5f0]">
    <span className="h-full w-[94px] bg-[#b0c4ee] pl-2 text-[#444]">{name}</span>
    <div className="flex flex-1 gap-[18px] pl-[14px]">{children}</div>
    <Down />
  </div>
);

const News = ({ children }: { children: ReactNode }) => (
  <>
    <a href="#news" className="flex-1 truncate pl-[10px] text-base">
      러시아, EU 금수조치 이후 중남미 경유 수출 확대
    </a>
    <span className="w-[77px]">23:10:32</span>
    <a href="#reuters" className="text-base">로이터뉴스</a>
    <Down />
    <div className="flex h-full w-[114px] items-center text-base">{children}</div>
  </>
);

const UP = "text-[#e0302e]";
const DN = "text-[#1a1ad0]";

const Ticker = () => (
  <div className="flex bg-[#c3d1ec]">
    <Grip />
    <div className="min-w-0 flex-1 text-[15px] text-[#333]">
      <div className="flex h-[31px] items-center border-b-2 border-[#dfe5f0] *:h-full *:leading-[29px]">
        <IndexCell name="KOSPI200">
          <span className={UP}>326.38</span>
          <span className={UP}>▲ 3.02</span>
          <span className={UP}>0.93%</span>
          <span className="text-black">144,408</span>
        </IndexCell>
        <IndexCell name="KOSPI 종합">
          <span className={UP}>2,512.08</span>
          <span className={UP}>▲21.67</span>
          <span className={UP}>0.87%</span>
          <span className="text-black">717,648</span>
        </IndexCell>
        <News>
          <Volume2 className="mr-1 h-[18px] w-[18px] fill-[#555] text-[#555]" />
          신호대기
        </News>
      </div>
      <div className="flex h-[27px] items-center *:h-full *:leading-[27px]">
        <IndexCell name="KOSPI 등락">
          <span className={UP}>▲223(↑1)</span>
          <span className="text-black">29</span>
          <span className={DN}>▼678(↓0)</span>
        </IndexCell>
        <IndexCell name="NASDAQ">
          <span className={DN}>11,943.95</span>
          <span className={DN}>▼144.01</span>
          <span className={DN}>-1.19%</span>
          <span className="text-black">0</span>
        </IndexCell>
        <News>
          <Settings className="mr-2 h-4 w-4 text-[#777]" strokeWidth={3} />
          <button className="h-full w-[48px] border-l border-[#e8edf6]">체결</button>
          <button className="h-full flex-1 border-l border-[#e8edf6]">감시</button>
        </News>
      </div>
    </div>
  </div>
);

/* ---------- windows taskbar ---------- */

const APPS: { name: string; art: ReactNode; dot?: boolean }[] = [
  {
    name: "작업 보기",
    art: (
      <>
        <path d="M9 2h21v20H9z" fill="#f2f2f2" />
        <path d="M1 9h22v19H1z" fill="#8a8c8e" fillOpacity="0.8" />
      </>
    ),
  },
  {
    name: "채팅",
    art: (
      <>
        <path d="M16 2a14 14 0 1 1-6 27l-7 1l1-7A14 14 0 0 1 16 2z" fill="#6a63d0" />
        <path d="M8 11h10v10H8zM19 14l5-3v10l-5-3z" fill="#fff" />
      </>
    ),
  },
  {
    name: "파일 탐색기",
    art: (
      <>
        <path d="M1 4h11l3 4h16v20H1z" fill="#e8a018" />
        <path d="M1 10h30v19H1z" fill="#ffd25a" />
        <path d="M6 22h20v7H6z" fill="#1380d8" />
        <path d="M12 25h8" stroke="#0a5ca8" strokeWidth="2" />
      </>
    ),
  },
  {
    name: "Edge",
    dot: true,
    art: (
      <>
        <circle cx="16" cy="16" r="14.500" fill="#1c7fd0" />
        <path d="M2 14a14.500 14.500 0 0 1 28.500 0c1 7-7 10-12 8c3-4 1-8-4-8c-5 0-9 0-12.500 0z" fill="#45c88e" />
        <path d="M2 15c3-5 12-6 15-1c-7 0-7 12 5 14A14.500 14.500 0 0 1 2 15z" fill="#1560b4" />
        <path d="M17 15c-5 2-3 9 5 9c3 0 5-1 7-2q-1 3-5 5c-12 0-14-10-7-12z" fill="#15283a" />
      </>
    ),
  },
  {
    name: "Store",
    art: (
      <>
        <path d="M11 8V3h10v5" fill="none" stroke="#2ca8e8" strokeWidth="2" />
        <rect x="2" y="7" width="28" height="23" rx="3" fill="#f4f4f4" />
        <path d="M10 12h5v5h-5z" fill="#f04e1f" />
        <path d="M17 12h5v5h-5z" fill="#7fb900" />
        <path d="M10 19h5v5h-5z" fill="#00a3ee" />
        <path d="M17 19h5v5h-5z" fill="#ffb800" />
      </>
    ),
  },
  {
    name: "빠른 검색",
    art: (
      <>
        <rect x="1" y="1" width="30" height="30" rx="13" fill="#2438c0" />
        <path d="M19 20a7 7 0 1 1 1-9M18 19l4 4" fill="none" stroke="#fff" strokeWidth="2" />
        <path d="M14 12h11M17 15h6M17 18h4" stroke="#fff" strokeWidth="1.500" />
      </>
    ),
  },
  {
    name: "전송",
    art: (
      <>
        <rect x="1" y="1" width="30" height="30" rx="13" fill="#6550d0" />
        <circle cx="16" cy="16" r="9" fill="none" stroke="#cfc6ff" strokeWidth="2" />
        <path d="M11 16h9M17 12l4 4l-4 4" fill="none" stroke="#fff" strokeWidth="2" />
      </>
    ),
  },
  {
    name: "Bixby",
    art: (
      <>
        <rect x="1" y="1" width="30" height="30" rx="13" fill="#3f94ec" />
        <path d="M12 8v9a5.500 5.500 0 1 0 6-4" fill="none" stroke="#fff" strokeWidth="4" />
      </>
    ),
  },
  {
    name: "카카오톡",
    dot: true,
    art: (
      <>
        <path d="M1 1h30v30H1z" fill="#fae100" />
        <path d="M16 6c15 0 15 17 0 17l-6 4l1-5C0 19 3 6 16 6z" fill="#3b1e1e" />
        <text x="16" y="18" textAnchor="middle" fill="#fae100" className='font-["Liberation_Sans",sans-serif] text-[8px] font-bold'>
          TALK
        </text>
      </>
    ),
  },
  {
    name: "Skype",
    dot: true,
    art: (
      <>
        <circle cx="16" cy="16" r="12" fill="#0a9ce8" />
        <circle cx="10" cy="10" r="7" fill="#0aa8ec" />
        <circle cx="22" cy="22" r="7" fill="#0a90e0" />
        <text x="16" y="23" textAnchor="middle" fill="#fff" className='font-["Liberation_Sans",sans-serif] text-xl font-bold'>
          S
        </text>
      </>
    ),
  },
];

const Taskbar = () => (
  <footer className="flex h-[60px] items-center bg-linear-to-r from-[#1e2124] via-[#132735] to-[#1e2124] text-white">
    <div className="flex w-[24%] items-center gap-3 pl-[27px] text-[15px] leading-5">
      <i className="h-[25px] w-[25px] rounded-full bg-linear-to-br from-[#f8b830] to-[#f06a10]" />
      <div>
        <p>20°C</p>
        <p className="text-[#d0d0d0]">맑음</p>
      </div>
    </div>
    <button aria-label="시작" className="ml-4 mr-4">
      <svg viewBox="0 0 30 30" className="h-[30px] w-[30px]" fill="#35b8f8">
        <path d="M0 0h14.500v14.500H0zM15.500 0H30v14.500H15.500zM0 15.500h14.500V30H0zM15.500 15.500H30V30H15.500z" />
      </svg>
    </button>
    <label className="flex h-10 w-[274px] items-center overflow-hidden rounded-full bg-[#2c3b46] pl-3">
      <svg viewBox="0 0 20 22" className="h-[22px] w-5" fill="none" strokeWidth="3">
        <circle cx="9" cy="9" r="7" stroke="#38c0b8" />
        <path d="M2 9a7 7 0 0 0 11 6l5 6" stroke="#2a86e4" />
      </svg>
      <input aria-label="검색" placeholder="검색" className="w-0 flex-1 px-3 text-[17px] placeholder:text-[#d8dde2]" />
      <svg viewBox="0 0 72 34" className="mr-[2px] h-[34px] w-[72px]">
        <path d="M2 34q3-10 24-9q28-4 44 1q-1 8-3 8z" fill="#6e9a3c" />
        <circle cx="23" cy="7" r="6" fill="#f2c078" />
        <path d="M11 31q-3-8 5-16q7 9 5 16z" fill="#f27022" />
        <path d="M13 31q0-6 3-9q4 5 3 9z" fill="#ffd04a" />
        <path d="M28 28L42 9l12 19z" fill="#5cb8dc" />
        <path d="M37 28l5-19l5 19z" fill="#2a6e94" />
        <path d="M57 29q-1-14 6-23q8 9 7 23z" fill="#98a832" />
      </svg>
    </label>
    <div className="ml-[6px] flex items-center">
      {APPS.map((a) => (
        <button key={a.name} aria-label={a.name} className="relative flex h-[60px] w-[55px] items-center justify-center">
          <svg viewBox="0 0 32 32" className="h-8 w-8">
            {a.art}
          </svg>
          {a.dot && <i className="absolute bottom-[6px] h-1 w-[7px] rounded-full bg-[#9aa0a6]" />}
        </button>
      ))}
      <button aria-label="영웅문" className="relative ml-[2px] flex h-[50px] w-[49px] items-center justify-center rounded bg-[#2b333b]">
        <svg viewBox="0 0 30 30" className="h-[30px] w-[30px] bg-white">
          <path
            d="M6 3l-3 7M5 8v12M9 4v15M8 8l5-1M8 12h5M8 16l5 1M11 5l2 13M19 3l2 3M25 2l-3 4M16 8h12M17 12l10-1M22 5v10M15 16l13-1M22 15l-7 13M22 15l6 13"
            fill="none"
            stroke="#d8201c"
            strokeWidth="2.500"
          />
        </svg>
        <i className="absolute bottom-0 h-1 w-5 rounded-full bg-[#4cb8f8]" />
      </button>
    </div>
    <div className="ml-auto flex items-center pr-[25px]">
      <ChevronUp className="mr-5 h-5 w-5" />
      <Cloud className="mr-4 h-[22px] w-[22px] fill-[#ddd] text-[#ddd]" />
      <svg viewBox="0 0 24 24" className="mr-[14px] h-6 w-6" fill="none" stroke="#eee" strokeWidth="1.500">
        <path d="M4 11a8 8 0 0 1 15-4M20 2v6h-6M3 21v-6h6M4 15l5 6" />
        <circle cx="17" cy="17" r="5" fill="#ff9400" stroke="none" />
      </svg>
      <svg viewBox="0 0 28 24" className="h-6 w-7" fill="none" stroke="#7fd0e8" strokeWidth="2">
        <path d="M8 2a3 3 0 0 1 3 3v4a3 3 0 0 1-6 0V5a3 3 0 0 1 3-3zM2 10a6 6 0 0 0 10 3M8 15v4M26 9l-11 7l5 1l2 5z" />
      </svg>
      <span className="w-[50px] text-center text-xl">가</span>
      <span className="w-[46px] text-center text-xl">한</span>
      <Wifi className="ml-3 mr-2 h-[22px] w-[22px]" />
      <Volume2 className="mr-2 h-[22px] w-[22px]" />
      <BatteryMedium className="mr-5 h-6 w-6" />
      <p className="whitespace-nowrap text-right text-[15px] leading-5">
        오후 11:24
        <br />
        2023-04-10
      </p>
      <span className="ml-[9px] h-5 w-5 rounded-full bg-[#4cb8f8] text-center text-xs leading-5 text-[#123]">4</span>
    </div>
  </footer>
);

export default function App() {
  return (
    <div className={clsx("flex min-h-screen flex-col justify-between overflow-hidden bg-[#3b5795]", FONT)}>
      <div className="pl-1 pr-1">
        <TitleBar />
        <MenuBar />
        <main className="flex">
          <section className="min-w-0 flex-1 bg-[#d0d0d0] px-1 pt-[5px]">
            <div className="mb-1 space-y-1">
              <Toolbar />
              <QuoteBar />
            </div>
            <Chart />
            <ScrollRow />
            <div className="-mx-1 h-[5px] bg-[#e4e4e4]" />
          </section>
          <DrawingTools />
        </main>
        <TabBar />
        <Ticker />
      </div>
      <Taskbar />
    </div>
  );
}
